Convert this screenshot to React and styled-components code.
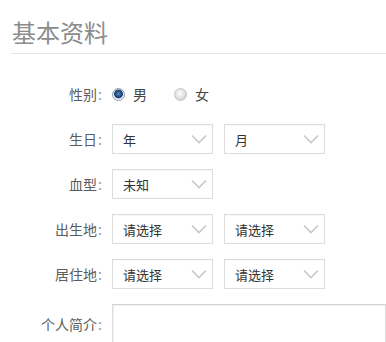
import React from "react";
import styled, { createGlobalStyle } from "styled-components";

const Global = createGlobalStyle`
  html, body { margin: 0; padding: 0; background: #fff; }
  body { font-family: "Noto Sans CJK SC", "Microsoft YaHei", sans-serif; overflow: hidden; }
`;

const Page = styled.div`
  width: 386px;
  height: 342px;
  padding-left: 11px;
  box-sizing: border-box;
  overflow: hidden;
`;

const Heading = styled.h2`
  margin: 0;
  padding: 15px 0 5px 1px;
  font-size: 24px;
  line-height: 33px;
  font-weight: 400;
  color: #8c8c8c;
  border-bottom: 1px solid #e6e6e6;
`;

const Form = styled.div`
  display: flex;
  flex-direction: column;
  gap: 15px;
  margin-top: 25px;
  margin-left: -11px;
`;

const Row = styled.div`
  display: flex;
  align-items: ${(p) => (p.$top ? "flex-start" : "center")};
  gap: 10px;
  min-height: 30px;
`;

const Label = styled.label`
  width: 102px;
  flex: none;
  text-align: right;
  font-size: 14px;
  line-height: ${(p) => (p.$top ? "40px" : "30px")};
  color: #5c5c5c;
`;

const Colon = styled.span`
  margin-left: 1px;
  color: #999;
`;

const Controls = styled.div`
  display: flex;
  align-items: center;
  gap: 11px;
`;

const RadioGroup = styled.div`
  display: flex;
  align-items: center;
  gap: 27px;
  padding-left: 0;
`;

const RadioItem = styled.span`
  display: flex;
  align-items: center;
  gap: 8px;
  font-size: 14px;
  color: #444;
`;

const RadioDot = styled.span`
  width: 11px;
  height: 11px;
  border-radius: 50%;
  border: 1px solid ${(p) => (p.$on ? "#8a9bb0" : "#c4c4c4")};
  background: ${(p) =>
    p.$on
      ? "radial-gradient(circle at 50% 45%, #5d86b5 0, #1f4f86 3px, #173f6d 4px, #e9eef3 4.8px, #f4f6f8 6px)"
      : "radial-gradient(circle at 45% 40%, #fdfdfd 0, #e6e6e6 4px, #d5d5d5 6px)"};
  box-sizing: content-box;
`;

const Select = styled.div`
  width: 101px;
  height: 30px;
  box-sizing: border-box;
  border: 1px solid #dcdcdc;
  box-shadow: inset 0 1px 1px rgba(0, 0, 0, 0.03);
  display: flex;
  align-items: center;
  justify-content: space-between;
  padding: 0 5px 0 10px;
  font-size: 13px;
  color: #333;
  background: #fff;
`;

const Textarea = styled.div`
  width: 290px;
  height: 80px;
  box-sizing: border-box;
  border: 1px solid #dcdcdc;
  border-top-color: #d2d2d2;
  box-shadow: inset 1px 1px 2px rgba(0, 0, 0, 0.06);
  background: #fff;
`;

const Chevron = () => (
  <svg width="16" height="10" viewBox="0 0 16 10">
    <path d="M1 1.5 L8 8.5 L15 1.5" fill="none" stroke="#c9c9c9" strokeWidth="1.6" />
  </svg>
);

const Sel = ({ children }) => (
  <Select>
    <span>{children}</span>
    <Chevron />
  </Select>
);

const Field = ({ label, top, children }) => (
  <Row $top={top}>
    <Label $top={top}>
      {label}
      <Colon>:</Colon>
    </Label>
    {children}
  </Row>
);

export default function App() {
  return (
    <>
      <Global />
      <Page>
        <Heading>基本资料</Heading>
        <Form>
          <Field label="性别">
            <RadioGroup>
              <RadioItem>
                <RadioDot $on />男
              </RadioItem>
              <RadioItem>
                <RadioDot />女
              </RadioItem>
            </RadioGroup>
          </Field>
          <Field label="生日">
            <Controls>
              <Sel>年</Sel>
              <Sel>月</Sel>
            </Controls>
          </Field>
          <Field label="血型">
            <Controls>
              <Sel>未知</Sel>
            </Controls>
          </Field>
          <Field label="出生地">
            <Controls>
              <Sel>请选择</Sel>
              <Sel>请选择</Sel>
            </Controls>
          </Field>
          <Field label="居住地">
            <Controls>
              <Sel>请选择</Sel>
              <Sel>请选择</Sel>
            </Controls>
          </Field>
          <Field label="个人简介" top>
            <Textarea />
          </Field>
        </Form>
      </Page>
    </>
  );
}
